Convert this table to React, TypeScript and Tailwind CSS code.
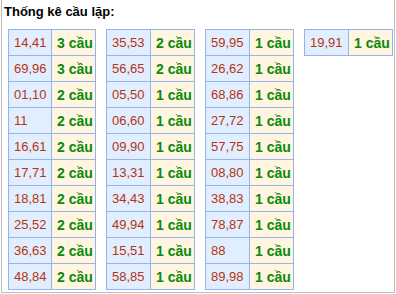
const columns: [string, number][][] = [
  [
    ["14,41", 3],
    ["69,96", 3],
    ["01,10", 2],
    ["11", 2],
    ["16,61", 2],
    ["17,71", 2],
    ["18,81", 2],
    ["25,52", 2],
    ["36,63", 2],
    ["48,84", 2],
  ],
  [
    ["35,53", 2],
    ["56,65", 2],
    ["05,50", 1],
    ["06,60", 1],
    ["09,90", 1],
    ["13,31", 1],
    ["34,43", 1],
    ["49,94", 1],
    ["15,51", 1],
    ["58,85", 1],
  ],
  [
    ["59,95", 1],
    ["26,62", 1],
    ["68,86", 1],
    ["27,72", 1],
    ["57,75", 1],
    ["08,80", 1],
    ["38,83", 1],
    ["78,87", 1],
    ["88", 1],
    ["89,98", 1],
  ],
  [["19,91", 1]],
];

function PairTable({ rows, first }: { rows: [string, number][]; first: boolean }) {
  return (
    <div
      className={`border-l border-t border-[#94b4ec] ${first ? "w-[88px]" : "w-[89px]"}`}
    >
      {rows.map(([pair, count]) => (
        <div key={pair} className="flex h-[26px]">
          <div
            className={`${first ? "w-[43px]" : "w-[44px]"} border-r border-b border-[#94b4ec] bg-[#e1eeff] pl-[5px] pt-[5px] text-[13px] leading-[16px] text-[#b5350f]`}
          >
            {pair}
          </div>
          <div className="w-[44px] border-r border-b border-[#94b4ec] bg-[#fff5e1] pl-[5px] pt-[5px] text-[14px] font-bold leading-[16px] text-[#0a8a0a]">
            {count} cầu
          </div>
        </div>
      ))}
    </div>
  );
}

export default function App() {
  return (
    <div className="h-[294px] w-[396px] bg-white font-['Liberation_Sans',Arial,sans-serif]">
      <div className="ml-px h-[293px] w-[394px] border-x border-b border-[#bdbdbd]">
        <div className="pl-[2px] pt-[4px] text-[13px] font-bold leading-[15px] text-black">
          Thống kê cầu lặp:
        </div>
        <div className="ml-[6px] mt-[10px] flex items-start gap-[10px]">
          {columns.map((rows, i) => (
            <PairTable key={i} rows={rows} first={i === 0} />
          ))}
        </div>
      </div>
    </div>
  );
}
